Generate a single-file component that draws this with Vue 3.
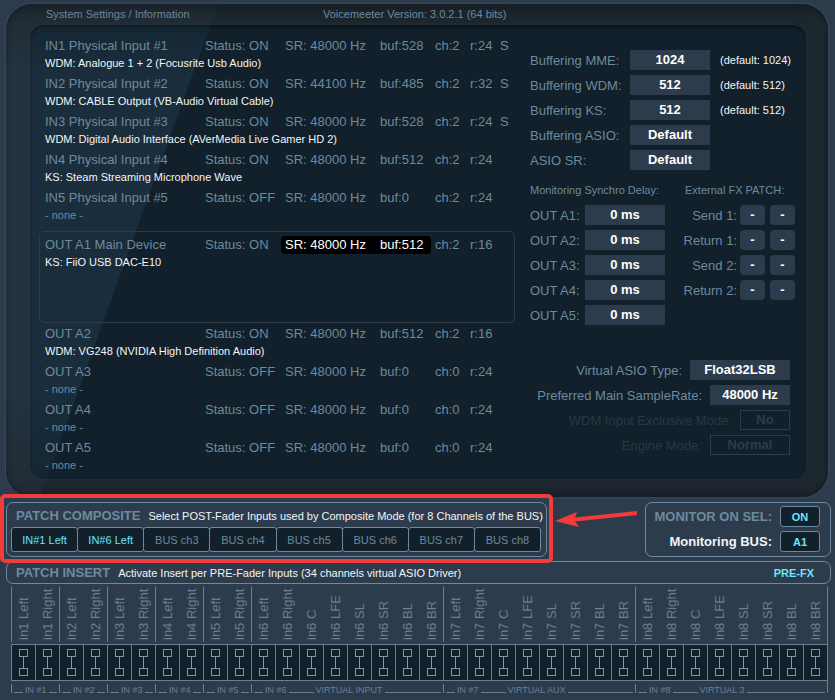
<script setup>
import { ref, reactive } from 'vue'

const inputs = [
  { name: 'IN1 Physical Input #1', on: true, sr: 48000, buf: 528, ch: 2, r: 24, s: true, device: 'WDM: Analogue 1 + 2 (Focusrite Usb Audio)' },
  { name: 'IN2 Physical Input #2', on: true, sr: 44100, buf: 485, ch: 2, r: 32, s: true, device: 'WDM: CABLE Output (VB-Audio Virtual Cable)' },
  { name: 'IN3 Physical Input #3', on: true, sr: 48000, buf: 528, ch: 2, r: 24, s: true, device: 'WDM: Digital Audio Interface (AVerMedia Live Gamer HD 2)' },
  { name: 'IN4 Physical Input #4', on: true, sr: 48000, buf: 512, ch: 2, r: 24, device: 'KS: Steam Streaming Microphone Wave' },
  { name: 'IN5 Physical Input #5', on: false, sr: 48000, buf: 0, ch: 2, r: 24 },
]
const mainOut = [
  { name: 'OUT A1 Main Device', on: true, sr: 48000, buf: 512, ch: 2, r: 16, device: 'KS: FiiO USB DAC-E10', main: true },
]
const outputs = [
  { name: 'OUT A2', on: true, sr: 48000, buf: 512, ch: 2, r: 16, device: 'WDM: VG248 (NVIDIA High Definition Audio)' },
  { name: 'OUT A3', on: false, sr: 48000, buf: 0, ch: 0, r: 24 },
  { name: 'OUT A4', on: false, sr: 48000, buf: 0, ch: 0, r: 24 },
  { name: 'OUT A5', on: false, sr: 48000, buf: 0, ch: 0, r: 24 },
]
const deviceGroups = [
  { id: 'inputs', rows: inputs },
  { id: 'main', rows: mainOut },
  { id: 'outputs', rows: outputs },
]

const buffering = [
  { label: 'Buffering MME:', value: '1024', note: '(default: 1024)' },
  { label: 'Buffering WDM:', value: '512', note: '(default: 512)' },
  { label: 'Buffering KS:', value: '512', note: '(default: 512)' },
  { label: 'Buffering ASIO:', value: 'Default' },
  { label: 'ASIO SR:', value: 'Default' },
]
const delays = ['A1', 'A2', 'A3', 'A4', 'A5']
const fxPatch = ['Send 1:', 'Return 1:', 'Send 2:', 'Return 2:']
const modes = [
  { label: 'Virtual ASIO Type:', value: 'Float32LSB', size: 'wide' },
  { label: 'Preferred Main SampleRate:', value: '48000 Hz', size: 'normal' },
  { label: 'WDM Input Exclusive Mode:', value: 'No', size: 'narrow', disabled: true },
  { label: 'Engine Mode:', value: 'Normal', size: 'normal', disabled: true },
]

const composite = [
  { text: 'IN#1 Left', set: true },
  { text: 'IN#6 Left', set: true },
  { text: 'BUS ch3' },
  { text: 'BUS ch4' },
  { text: 'BUS ch5' },
  { text: 'BUS ch6' },
  { text: 'BUS ch7' },
  { text: 'BUS ch8' },
]

const surround = ['Left', 'Right', 'C', 'LFE', 'SL', 'SR', 'BL', 'BR']
const strips = [
  ...[1, 2, 3, 4, 5].map((n) => ({ n, channels: ['Left', 'Right'] })),
  { n: 6, channels: surround, virtual: 'VIRTUAL INPUT' },
  { n: 7, channels: surround, virtual: 'VIRTUAL AUX' },
  { n: 8, channels: surround, virtual: 'VIRTUAL 3' },
]

const inserts = reactive({})
const monitorOnSel = ref(true)
function toggleInsert(key) {
  inserts[key] = !inserts[key]
}
</script>

<template>
  <main class="app">
    <section class="device">
      <header class="device-head">
        <h1>System Settings / Information</h1>
        <p>Voicemeeter Version: 3.0.2.1 (64 bits)</p>
      </header>

      <div class="screen">
        <div class="devices">
          <ul v-for="group in deviceGroups" :key="group.id" :class="['group', group.id]">
            <li v-for="d in group.rows" :key="d.name">
              <div class="line">
                <span>{{ d.name }}</span>
                <span>Status: {{ d.on ? 'ON' : 'OFF' }}</span>
                <span :class="['rate', { lit: d.main }]">
                  <span>SR: {{ d.sr }} Hz</span><span>buf:{{ d.buf }}</span>
                </span>
                <span>ch:{{ d.ch }}</span>
                <span>r:{{ d.r }}</span>
                <span>{{ d.s ? 'S' : '' }}</span>
              </div>
              <p :class="['driver', { none: !d.device }]">{{ d.device || '- none -' }}</p>
            </li>
          </ul>
        </div>

        <div class="settings">
          <div class="buffering">
            <div v-for="(b, i) in buffering" :key="b.label" class="setting">
              <label :for="'buf' + i">{{ b.label }}</label>
              <button :id="'buf' + i" type="button" class="value">{{ b.value }}</button>
              <span class="note">{{ b.note }}</span>
            </div>
          </div>

          <div class="patches">
            <div class="delays">
              <h2>Monitoring Synchro Delay:</h2>
              <div v-for="d in delays" :key="d" class="setting">
                <label :for="'delay' + d">OUT {{ d }}:</label>
                <button :id="'delay' + d" type="button" class="value">0 ms</button>
              </div>
            </div>
            <div class="fx">
              <h2>External FX PATCH:</h2>
              <div v-for="(f, i) in fxPatch" :key="f" class="setting">
                <label :id="'fxl' + i" :for="'fx' + i">{{ f }}</label>
                <button :id="'fx' + i" type="button" class="value slot">-</button>
                <button :aria-labelledby="'fxl' + i" type="button" class="value slot">-</button>
              </div>
            </div>
          </div>

          <div class="modes">
            <div v-for="(m, i) in modes" :key="m.label" :class="['setting', { off: m.disabled }]">
              <label :for="'mode' + i">{{ m.label }}</label>
              <button :id="'mode' + i" type="button" :disabled="m.disabled" :class="['value', m.size]">{{ m.value }}</button>
            </div>
          </div>
        </div>
      </div>
    </section>

    <div class="routing">
      <section class="box composite">
        <div class="box-head">
          <h2>PATCH COMPOSITE</h2>
          <p>Select POST-Fader Inputs used by Composite Mode (for 8 Channels of the BUS)</p>
        </div>
        <div class="bus-row">
          <button v-for="c in composite" :key="c.text" type="button" :class="['bus', { set: c.set }]">{{ c.text }}</button>
        </div>
        <div class="callout"></div>
        <svg class="arrow" width="84" height="26" viewBox="0 0 84 26" aria-hidden="true">
          <path d="M1 17 L23 8 L21 13.500 L83 7 L83 11 L21 17.500 L25 23 Z" fill="#f23c3c" />
        </svg>
      </section>

      <section class="box monitor">
        <div class="mon-row">
          <label for="monsel">MONITOR ON SEL:</label>
          <button id="monsel" type="button" class="mon" @click="monitorOnSel = !monitorOnSel">{{ monitorOnSel ? 'ON' : 'OFF' }}</button>
        </div>
        <div class="mon-row bright">
          <label for="monbus">Monitoring BUS:</label>
          <button id="monbus" type="button" class="mon">A1</button>
        </div>
      </section>
    </div>

    <section class="insert">
      <div class="box insert-head">
        <h2>PATCH INSERT</h2>
        <p>Activate Insert per PRE-Fader Inputs (34 channels virtual ASIO Driver)</p>
        <button type="button" class="prefx">PRE-FX</button>
      </div>

      <div class="strips">
        <div v-for="s in strips" :key="s.n" :class="['strip', { big: s.virtual }]">
          <div class="names">
            <span v-for="c in s.channels" :id="'ch' + s.n + c" :key="c">in{{ s.n }} {{ c }}</span>
          </div>
          <div class="cells">
            <button
              v-for="c in s.channels"
              :key="c"
              type="button"
              :class="['cell', { active: inserts[s.n + c] }]"
              :aria-labelledby="'ch' + s.n + c"
              @click="toggleInsert(s.n + c)"
            >
              <svg width="9" height="28" viewBox="0 0 9 28" shape-rendering="crispEdges" aria-hidden="true">
                <path d="M.5 .5h8v7h-8zM.5 19.500h8v7h-8zM4.500 7.500v12" fill="none" stroke="currentColor" />
              </svg>
            </button>
          </div>
          <div class="foot">
            <i class="rule"></i><span>IN #{{ s.n }}</span>
            <template v-if="s.virtual">
              <i class="rule mid"></i><span>{{ s.virtual }}</span>
            </template>
            <i class="rule end"></i>
          </div>
        </div>
      </div>
    </section>
  </main>
</template>

<style>
body {
  margin: 0;
  background: #2d3c4c;
}
</style>

<style scoped>
* {
  box-sizing: border-box;
}
.app {
  padding: 4px 4px 5px 6px;
  background: #2d3c4c;
  color: #6d8a9f;
  font-family: "Liberation Sans", Arial, sans-serif;
  font-size: 13px;
  overflow: hidden;
}
h1, h2, p, ul {
  margin: 0;
  padding: 0;
  font-weight: normal;
}
ul {
  list-style: none;
}
button {
  margin: 0;
  padding: 0;
  font-family: inherit;
  cursor: pointer;
}

/* device frame */
.device {
  position: relative;
  margin-right: 3px;
  padding: 0 22px 18px 24px;
  border-radius: 26px;
  background: linear-gradient(#192027, #1d272e 20px, #1d272e 474px, #1a232b);
  box-shadow: inset 0 0 5px #10181f, 0 0 2px 1px #3a4a58;
  overflow: hidden;
}
.device::after {
  content: "";
  position: absolute;
  inset: 0;
  clip-path: polygon(0 0, 212px 0, 34px 100%, 0 100%);
  background: linear-gradient(rgba(75, 115, 160, 0.04), rgba(75, 115, 160, 0.16) 70px, rgba(75, 115, 160, 0.16) 380px, rgba(75, 115, 160, 0.06));
  pointer-events: none;
}
.device-head {
  display: flex;
  height: 21px;
  padding-left: 16px;
  line-height: 21px;
}
.device-head h1 {
  width: 277px;
  font-size: 11px;
  color: #70869a;
}
.device-head p {
  font-size: 11px;
}
.screen {
  display: flex;
  gap: 15px;
  padding: 11px 10px 5px 9px;
  border-radius: 14px;
  background: #11202a;
  box-shadow: inset 0 2px 3px #09131a, 0 0 3px 1px #222c32;
}

/* device list */
.devices {
  position: relative;
  z-index: 1;
  flex: 1 1 476px;
}
.group {
  display: flex;
  flex-direction: column;
  gap: 4px;
  padding: 0 6px 2px;
}
.main {
  height: 92px;
  margin: 7px 0 1px;
  padding: 3px 5px;
  border: 1px solid #2d3c4c;
  border-radius: 5px;
}
.line {
  display: grid;
  grid-template-columns: 160px 76px 154px 35px 30px 1fr;
  line-height: 20px;
  white-space: nowrap;
}
.rate {
  display: grid;
  grid-template-columns: 95px 1fr;
  margin-right: 4px;
  padding-left: 4px;
  border-radius: 4px;
}
.lit {
  margin-top: 1px;
  margin-bottom: 1px;
  background: #000;
  color: #fff;
  line-height: 18px;
}
.driver {
  font-size: 11px;
  line-height: 14px;
  color: #f2f5f7;
}
.none {
  color: #6d8a9f;
}

/* settings column */
.settings {
  flex: 0 0 266px;
  padding-top: 14px;
}
.setting {
  display: flex;
  align-items: center;
  height: 20px;
  margin-bottom: 5px;
  white-space: nowrap;
}
.value {
  flex-shrink: 0;
  width: 80px;
  height: 20px;
  border: 0;
  background: #2d3c4c;
  color: #fff;
  font-size: 13px;
  font-weight: bold;
  line-height: 20px;
}
.slot {
  width: 25px;
  margin-left: 5px;
  border-radius: 4px;
}
.wide {
  width: 100px;
}
.narrow {
  width: 50px;
}
.buffering label {
  width: 100px;
}
.note {
  margin-left: 10px;
  font-size: 11px;
  color: #f2f5f7;
}
.patches {
  display: flex;
  justify-content: space-between;
}
.patches h2 {
  font-size: 11px;
  line-height: 20px;
  margin: 5px 0;
  white-space: nowrap;
}
.delays label {
  width: 55px;
}
.fx {
  width: 111px;
}
.fx .setting {
  justify-content: flex-end;
  padding-right: 1px;
}
.fx label {
  margin-right: -2px;
}
.modes {
  padding: 30px 6px 0 0;
}
.modes .setting {
  justify-content: flex-end;
  gap: 8px;
}
.off {
  color: #283845;
}
.off .value {
  border: 1px solid #2d3c4c;
  background: none;
  color: #2d3c4c;
  line-height: 18px;
}

/* routing */
.routing {
  display: flex;
  justify-content: space-between;
  margin-top: 5px;
}
.box {
  border: 1px solid #6d8a9f;
  border-radius: 7px;
}
.box h2 {
  font-size: 13px;
  font-weight: bold;
  color: #6d8a9f;
}
.box p {
  font-size: 11px;
  color: #f2f5f7;
}
.box-head {
  display: flex;
  gap: 8px;
  height: 24px;
  padding-left: 5px;
  line-height: 26px;
  white-space: nowrap;
}
.composite {
  position: relative;
  flex: 0 1 541px;
  min-width: 0;
  height: 55px;
  padding: 0 6px 0 4px;
}
.bus-row {
  display: grid;
  grid-template-columns: repeat(8, minmax(0, 1fr));
}
.bus {
  height: 25px;
  margin-right: -1px;
  border: 1px solid #6d8a9f;
  border-radius: 3px;
  background: #11202a;
  color: #6d8a9f;
  font-size: 11px;
}
.set, .mon, .prefx {
  color: #66e6ff;
}
.callout {
  position: absolute;
  inset: -9px -7px -7px -7px;
  border: 4px solid #f23c3c;
  border-radius: 5px;
  pointer-events: none;
}
.arrow {
  position: absolute;
  left: calc(100% + 8px);
  top: 1px;
}
.monitor {
  display: flex;
  flex-direction: column;
  gap: 4px;
  width: 186px;
  height: 55px;
  padding: 3px 10px 0 0;
}
.mon-row {
  display: flex;
  align-items: center;
  justify-content: flex-end;
  gap: 8px;
  font-weight: bold;
  white-space: nowrap;
}
.bright {
  color: #f2f5f7;
}
.mon {
  width: 40px;
  height: 21px;
  border: 1px solid #6d8a9f;
  border-radius: 3px;
  background: #11202a;
  font-size: 11px;
  font-weight: bold;
}

/* inserts */
.insert {
  margin-top: 4px;
}
.insert-head {
  display: flex;
  align-items: center;
  gap: 8px;
  height: 23px;
  padding: 0 16px 0 9px;
  white-space: nowrap;
}
.prefx {
  margin-left: auto;
  border: 0;
  background: none;
  font-size: 11px;
  font-weight: bold;
}
.strips {
  display: flex;
  margin: 2px 3px 0 5px;
  border-right: 1px solid #6b7f93;
  color: #6b7f93;
}
.strip {
  flex: 2 1 0;
  min-width: 0;
}
.big {
  flex-grow: 8;
}
.names {
  display: flex;
  height: 56px;
  border-left: 1px solid #6b7f93;
}
.names span {
  flex: 1 1 0;
  writing-mode: vertical-rl;
  transform: rotate(180deg);
  font-size: 13px;
  line-height: 24px;
  white-space: nowrap;
  padding-top: 2px;
}
.cells {
  display: flex;
  margin-top: 2px;
  border: solid #6b7f93;
  border-width: 1px 0;
}
.cell {
  display: flex;
  flex: 1 1 0;
  justify-content: center;
  height: 35px;
  padding-top: 4px;
  border: 0;
  border-left: 1px solid #6b7f93;
  background: #11202a;
  color: #7f95a8;
}
.active {
  color: #66e6ff;
}
.foot {
  display: flex;
  height: 9px;
  margin-top: 3px;
  padding: 0 2px;
  gap: 2px;
  border-left: 1px solid #6b7f93;
  font-size: 9px;
  line-height: 12px;
  white-space: nowrap;
}
.rule {
  width: 9px;
  border-bottom: 1px solid #6b7f93;
}
.mid {
  width: 25px;
}
.end {
  flex: 1;
}
</style>
